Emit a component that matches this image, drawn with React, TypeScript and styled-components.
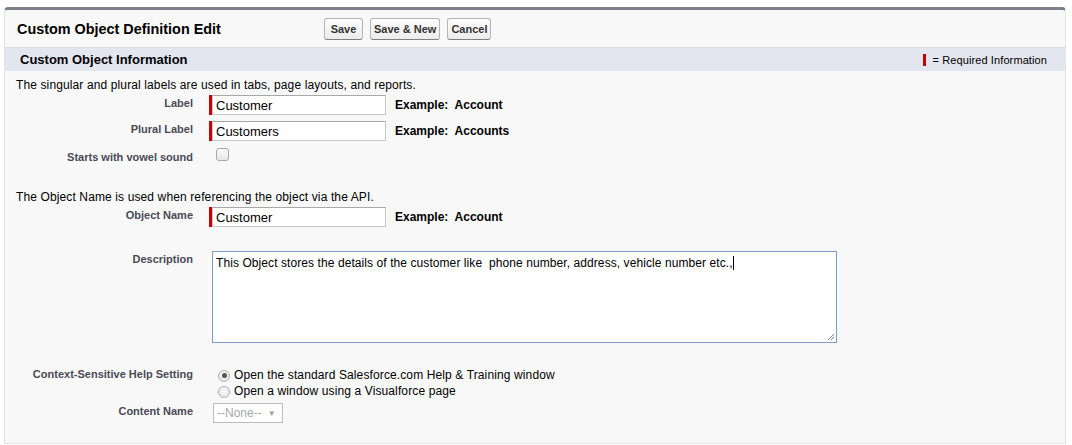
import type { FC, ReactElement, ReactNode } from "react";
import styled, { createGlobalStyle } from "styled-components";

const GlobalStyle = createGlobalStyle`
    body {
        margin: 0;
        background: #ffffff;
        font-family: "Liberation Sans", Arial, sans-serif;
        color: #000000;
    }
`;

const Page = styled.div`
    padding: 7px 6px 2px 4px;
`;

const Panel = styled.div`
    background: #f8f8f8;
    border-top: 3px solid #7d808a;
    border-left: 1px solid #e2e4e8;
    border-right: 1px solid #e2e4e8;
    border-bottom: 1px solid #e2e4e8;
    border-radius: 4px 4px 0 0;
    height: 437px;
    box-sizing: border-box;
`;

const Header = styled.div`
    display: flex;
    align-items: center;
    height: 37px;
    padding-left: 12px;
    border-bottom: 1px solid #dcdcdc;
`;

const Title = styled.h2`
    margin: 0;
    width: 307px;
    font-size: 14.4px;
    font-weight: bold;
    color: #000;
`;

const ButtonBar = styled.div`
    display: flex;
    gap: 7px;
    margin-top: 1px;
`;

const Button = styled.button`
    height: 22px;
    min-width: 39px;
    padding: 0 3px;
    font-family: "Liberation Sans", Arial, sans-serif;
    font-size: 11px;
    font-weight: bold;
    color: #333;
    background: linear-gradient(#fdfdfd, #ececec);
    border: 1px solid #b5b5b5;
    border-bottom-color: #7f7f7f;
    border-radius: 3px;
`;

const SectionBar = styled.div`
    display: flex;
    align-items: center;
    justify-content: space-between;
    height: 23px;
    padding: 0 18px 0 15px;
    background: #e3e6ee;
`;

const SectionTitle = styled.h3`
    margin: 0;
    font-size: 13px;
    font-weight: bold;
    color: #000;
`;

const Legend = styled.span`
    display: flex;
    align-items: center;
    gap: 7px;
    font-size: 11px;
    letter-spacing: 0.1px;
    color: #000;
`;

const RequiredMark = styled.span`
    display: inline-block;
    width: 3px;
    height: 12px;
    background: #c00;
`;

const Body = styled.div`
    padding-top: 7px;
`;

const Intro = styled.p<{ $top?: number }>`
    margin: ${({ $top }) => $top ?? 0}px 0 0 11px;
    font-size: 12px;
    line-height: 14px;
    letter-spacing: 0.12px;
`;

const Row = styled.div<{ $top: number }>`
    display: grid;
    grid-template-columns: 188px 1fr;
    column-gap: 16px;
    margin-top: ${({ $top }) => $top}px;
`;

const Label = styled.div<{ $pad?: number }>`
    text-align: right;
    font-size: 11px;
    font-weight: bold;
    color: #4a4a56;
    padding-top: ${({ $pad }) => $pad ?? 2}px;
`;

const Value = styled.div<{ $required?: boolean }>`
    display: flex;
    align-items: flex-start;
    gap: 9px;
    padding-left: ${({ $required }) => ($required ? 0 : 3)}px;
`;

const RequiredInput = styled.div`
    display: flex;
    border-left: 3px solid #c00;
`;

const Input = styled.input`
    box-sizing: border-box;
    width: 174px;
    height: 20px;
    margin: 0;
    padding: 0 3px;
    border: 1px solid #c7c7c7;
    border-top-color: #a8a8a8;
    background: #fff;
    font-family: "Liberation Sans", Arial, sans-serif;
    font-size: 13px;
    color: #000;
    outline: none;
`;

const Example = styled.span`
    font-size: 12px;
    font-weight: bold;
    line-height: 20px;
    white-space: pre;
`;

const Checkbox = styled.span`
    display: inline-block;
    box-sizing: border-box;
    width: 13px;
    height: 13px;
    margin: -1px 0 0 4px;
    border: 1px solid #a9a9a9;
    border-radius: 3px;
    background: linear-gradient(#fbfbfb, #e6e6e6);
`;

const TextArea = styled.div`
    position: relative;
    box-sizing: border-box;
    width: 625px;
    height: 92px;
    padding: 4px 3px;
    border: 1px solid #7f9cc9;
    background: #fff;
    font-size: 12px;
    line-height: 14px;
    letter-spacing: 0.08px;
    white-space: pre;
`;

const Caret = styled.span`
    display: inline-block;
    width: 1px;
    height: 14px;
    background: #000;
    vertical-align: top;
`;

const Grip = styled.svg`
    position: absolute;
    right: 1px;
    bottom: 1px;
`;

const RadioList = styled.div`
    display: flex;
    flex-direction: column;
    gap: 3px;
    padding: 1px 0 0 6px;
`;

const RadioLine = styled.label`
    display: flex;
    align-items: center;
    gap: 4px;
    font-size: 12px;
    line-height: 13px;
    letter-spacing: 0.12px;
`;

const Radio = styled.span<{ $checked?: boolean }>`
    display: inline-flex;
    align-items: center;
    justify-content: center;
    box-sizing: border-box;
    width: 12px;
    height: 12px;
    border-radius: 50%;
    border: 1px solid #b4b4b4;
    background: radial-gradient(circle at 50% 40%, #ffffff, #dcdcdc);

    &::after {
        content: "";
        display: ${({ $checked }) => ($checked ? "block" : "none")};
        width: 5px;
        height: 5px;
        border-radius: 50%;
        background: #555;
    }
`;

const Select = styled.div`
    display: flex;
    align-items: center;
    gap: 6px;
    box-sizing: border-box;
    height: 20px;
    margin-left: 1px;
    padding: 0 6px 0 3px;
    border: 1px solid #bcbcbc;
    background: #fff;
    font-size: 12px;
    color: #a8a8a8;
`;

const Arrow = styled.span`
    font-size: 8px;
    color: #a0a0a0;
`;

interface FieldProps {
    label: string;
    top: number;
    required?: boolean;
    labelPad?: number;
    children: ReactNode;
}

const Field: FC<FieldProps> = ({ label, top, required, labelPad, children }): ReactElement => (
    <Row $top={top}>
        <Label $pad={labelPad}>{label}</Label>
        <Value $required={required}>{children}</Value>
    </Row>
);

const TextField: FC<{ label: string; value: string; example: string; top: number }> = ({ label, value, example, top }) => (
    <Field label={label} top={top} required>
        <RequiredInput>
            <Input defaultValue={value} />
        </RequiredInput>
        <Example>{`Example:  ${example}`}</Example>
    </Field>
);

const App: FC = (): ReactElement => (
    <>
        <GlobalStyle />
        <Page>
            <Panel>
                <Header>
                    <Title>Custom Object Definition Edit</Title>
                    <ButtonBar>
                        <Button>Save</Button>
                        <Button>Save &amp; New</Button>
                        <Button>Cancel</Button>
                    </ButtonBar>
                </Header>
                <SectionBar>
                    <SectionTitle>Custom Object Information</SectionTitle>
                    <Legend>
                        <RequiredMark />= Required Information
                    </Legend>
                </SectionBar>
                <Body>
                    <Intro>The singular and plural labels are used in tabs, page layouts, and reports.</Intro>
                    <TextField label="Label" value="Customer" example="Account" top={3} />
                    <TextField label="Plural Label" value="Customers" example="Accounts" top={6} />
                    <Field label="Starts with vowel sound" top={8}>
                        <Checkbox />
                    </Field>
                    <Intro $top={27}>The Object Name is used when referencing the object via the API.</Intro>
                    <TextField label="Object Name" value="Customer" example="Account" top={3} />
                    <Field label="Description" top={24}>
                        <TextArea>
                            This Object stores the details of the customer like  phone number, address, vehicle number etc.,
                            <Caret />
                            <Grip width="10" height="10" viewBox="0 0 10 10">
                                <path d="M9 3 L3 9 M9 6 L6 9" stroke="#8a8a8a" strokeWidth="1" />
                            </Grip>
                        </TextArea>
                    </Field>
                    <Field label="Context-Sensitive Help Setting" top={25} labelPad={0}>
                        <RadioList>
                            <RadioLine>
                                <Radio $checked />
                                Open the standard Salesforce.com Help &amp; Training window
                            </RadioLine>
                            <RadioLine>
                                <Radio />
                                Open a window using a Visualforce page
                            </RadioLine>
                        </RadioList>
                    </Field>
                    <Field label="Content Name" top={5}>
                        <Select>
                            --None--<Arrow>▼</Arrow>
                        </Select>
                    </Field>
                </Body>
            </Panel>
        </Page>
    </>
);

export default App;
